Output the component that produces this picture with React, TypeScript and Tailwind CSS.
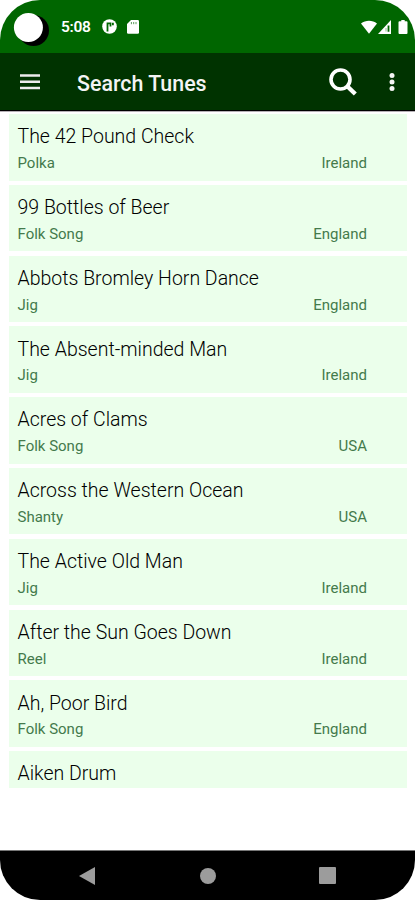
import React from 'react'

const tunes = [
    { title: 'The 42 Pound Check', type: 'Polka', country: 'Ireland' },
    { title: '99 Bottles of Beer', type: 'Folk Song', country: 'England' },
    { title: 'Abbots Bromley Horn Dance', type: 'Jig', country: 'England' },
    { title: 'The Absent-minded Man', type: 'Jig', country: 'Ireland' },
    { title: 'Acres of Clams', type: 'Folk Song', country: 'USA' },
    { title: 'Across the Western Ocean', type: 'Shanty', country: 'USA' },
    { title: 'The Active Old Man', type: 'Jig', country: 'Ireland' },
    { title: 'After the Sun Goes Down', type: 'Reel', country: 'Ireland' },
    { title: 'Ah, Poor Bird', type: 'Folk Song', country: 'England' },
    { title: 'Aiken Drum', type: '', country: '' },
]

const StatusBar = () => {
    return (
        <div className="flex h-[53px] shrink-0 items-center bg-[#006600] pl-[13px] pr-[7px] text-white">

            {/* camera cutout */}
            <svg className="h-[38px] w-[37px]" viewBox="0 0 37 38">
                <circle cx="20.500" cy="25" r="15.500" transform="translate(0 -2.500)" fill="#000" />
                <circle cx="15.400" cy="19.600" r="14.500" fill="#fff" />
            </svg>

            <span className="ml-[11px] mt-px w-[30px] text-[15.500px] font-semibold leading-5 tracking-[-0.300px]">5:08</span>

            <svg className="ml-[11px] h-[15px] w-[15px]" viewBox="0 0 15 15">
                <circle cx="7.500" cy="7.500" r="7.300" fill="#fff" />
                <path d="M5.500 12.500V4.400h3v3" fill="none" stroke="#006600" strokeWidth="1.800" />
                <path d="M10 3.800h1.800v2.400H10z" fill="#006600" />
            </svg>

            <svg className="ml-[10px] h-[14px] w-3" viewBox="0 0 12 14">
                <path d="M4 0h6.700A1.300 1.300 0 0 1 12 1.300v11.200a1.300 1.300 0 0 1-1.300 1.300H1.300A1.300 1.300 0 0 1 0 12.500V4z" fill="#fff" />
                <path d="M4.400 2v2.200M6.700 2v2.200M9 2v2.200" stroke="#5c9c5c" strokeWidth="1" />
            </svg>

            <div className="ml-auto flex items-center">
                <svg className="h-[14px] w-4" viewBox="0 0 16 14">
                    <path d="M8 13.800 0 3.400C4.500-.3 11.500-.3 16 3.400z" fill="#fff" />
                </svg>
                <svg className="ml-[1px] h-[14px] w-[13px]" viewBox="0 0 13 14">
                    <path d="M13 0v14H0z" fill="#fff" />
                    <path d="M10.500 5.500v6.300" stroke="#006600" strokeWidth="1.800" />
                    <path d="M8 8v3.500" stroke="#8fbc8f" strokeWidth="1" />
                </svg>
                <svg className="ml-[7px] h-[14px] w-[10px]" viewBox="0 0 9 14">
                    <path d="M2.800 0h3.400v1.300H8a1 1 0 0 1 1 1V13a1 1 0 0 1-1 1H1a1 1 0 0 1-1-1V2.300a1 1 0 0 1 1-1h1.800z" fill="#fff" />
                </svg>
            </div>

        </div>
    )
}

const Toolbar = () => {
    return (
        <div className="flex h-[58px] shrink-0 items-center border-b border-black bg-[#003300] pl-5 pr-5 text-white">

            <svg className="h-4 w-5" viewBox="0 0 20 16">
                <path d="M0 1.500h20M0 7.800h20M0 14h20" stroke="#ececec" strokeWidth="2.400" />
            </svg>

            <h1 className="ml-[37px] mt-1 text-[21.400px] font-medium leading-7 text-[#f4f4f4]">Search Tunes</h1>

            <svg className="ml-auto h-7 w-7" viewBox="0 0 28 28">
                <circle cx="11.500" cy="11.500" r="9.500" fill="none" stroke="#fff" strokeWidth="3.600" />
                <path d="m18.500 18.500 7.800 7.500" stroke="#fff" strokeWidth="4.300" />
            </svg>

            <svg className="ml-[32px] h-5 w-[6px]" viewBox="0 0 6 20">
                <circle cx="3" cy="3.500" r="2.500" fill="#f4f4f4" />
                <circle cx="3" cy="10" r="2.500" fill="#f4f4f4" />
                <circle cx="3" cy="16.500" r="2.500" fill="#f4f4f4" />
            </svg>

        </div>
    )
}

const NavBar = () => {
    return (
        <div className="flex h-[50px] shrink-0 items-center justify-between border-t border-[#777777] bg-black pl-[79px] pr-[79px]">
            <svg className="h-[18px] w-4" viewBox="0 0 16 18">
                <path d="M16 0v18L0 9z" fill="#9c9c9c" />
            </svg>
            <div className="ml-px h-4 w-4 rounded-full bg-[#9c9c9c]" />
            <div className="h-[17px] w-[17px] rounded-[1px] bg-[#9c9c9c]" />
        </div>
    )
}

const App = () => {
    return (
        <div className="flex h-[900px] w-[415px] flex-col overflow-hidden rounded-[40px] bg-white font-['Roboto',sans-serif]">

            <StatusBar />
            <Toolbar />

            <div className="h-[677px] shrink-0 space-y-[4.300px] overflow-hidden border-t border-[#b5b0b5] pl-[9px] pr-2 pt-[2px]">
                {tunes.map(({ title, type, country }) => (
                    <div key={title} className="h-[66.500px] bg-[#ebffeb] pl-[8.500px] pr-10 pt-[10.300px]">
                        <h2 className="text-[19.500px] font-light leading-[26px] text-black">{title}</h2>
                        <div className="mt-[2.700px] flex justify-between text-[15px] leading-5 text-[#447a4c]">
                            <span>{type}</span>
                            <span>{country}</span>
                        </div>
                    </div>
                ))}
            </div>

            <div className="flex-1" />
            <NavBar />

        </div>
    )
}

export default App
